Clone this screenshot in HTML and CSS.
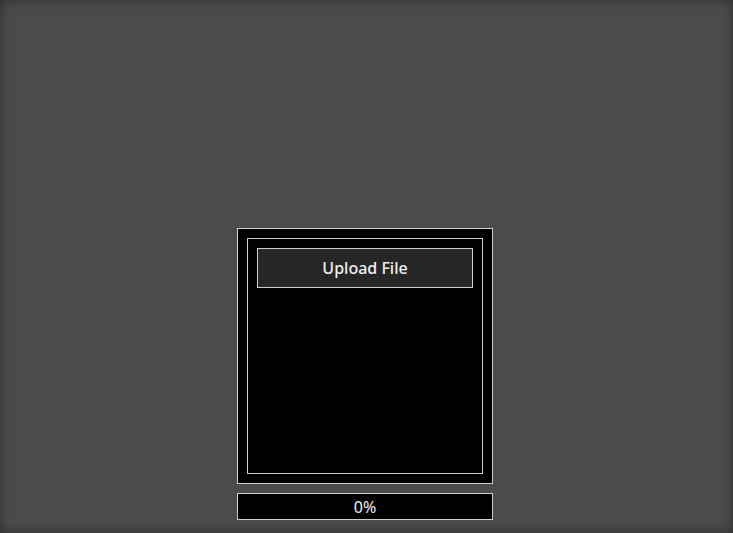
FILE: index.html
```html
<!DOCTYPE html>
<html lang="en">
<head>
<meta charset="utf-8">
<title>Upload</title>
<link rel="stylesheet" href="styles.css">
</head>
<body>
<main class="stage">
  <section class="panel">
    <div class="dropzone">
      <button class="upload-btn" type="button">Upload File</button>
    </div>
  </section>
  <div class="progress"><span class="progress-label">0%</span></div>
</main>
</body>
</html>
```
FILE: styles.css
```css
html, body {
  margin: 0;
  height: 100%;
}
body {
  background-color: #4b4b4b;
  background-image: repeating-conic-gradient(#4e4e4e 0 25%, #484848 0 50%);
  background-size: 2px 2px;
  font-family: "Noto Sans", "Open Sans", sans-serif;
}
.stage {
  box-sizing: border-box;
  height: 100%;
  display: flex;
  flex-direction: column;
  align-items: center;
  justify-content: flex-end;
  padding: 0 3px 13px 0;
  gap: 9px;
  box-shadow: inset 0 0 12px rgba(0, 0, 0, 0.4);
}
.panel {
  box-sizing: border-box;
  width: 256px;
  height: 256px;
  padding: 9px;
  border: 1px solid #cfcfcf;
  background: #000;
}
.dropzone {
  box-sizing: border-box;
  height: 100%;
  padding: 9px;
  border: 1px solid #cfcfcf;
}
.upload-btn {
  box-sizing: border-box;
  display: block;
  width: 100%;
  height: 40px;
  margin: 0;
  padding: 0;
  border: 1px solid #cfcfcf;
  background-color: #262626;
  background-image: repeating-conic-gradient(#292929 0 25%, #242424 0 50%);
  background-size: 2px 2px;
  color: #f0f0f0;
  font-family: "Noto Sans", "Open Sans", sans-serif;
  font-size: 16px;
  font-weight: 500;
}
.progress {
  box-sizing: border-box;
  width: 256px;
  height: 27px;
  border: 1px solid #cfcfcf;
  background: #000;
  display: flex;
  align-items: center;
  justify-content: center;
  color: #f0f0f0;
  font-size: 16px;
  font-weight: 400;
}
```
